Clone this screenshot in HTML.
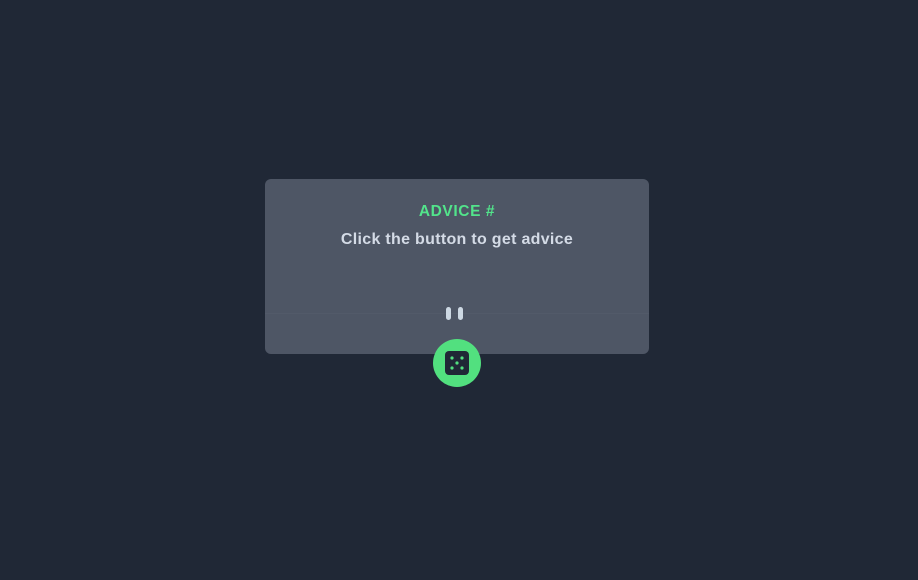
<!DOCTYPE html>
<html><head><meta charset="utf-8"><style>
html,body{margin:0;padding:0;width:918px;height:580px;background:#202836;overflow:hidden;font-family:"Liberation Sans",sans-serif}
.card{position:absolute;left:265px;top:179px;width:384px;height:175px;background:#4e5665;border-radius:6px}
.t1{position:absolute;left:0;width:100%;top:24px;text-align:center;color:#52e48b;font-weight:bold;font-size:15.5px;letter-spacing:0.6px}
.t2{position:absolute;left:0;width:100%;top:52px;text-align:center;color:#d4dbe6;font-weight:bold;font-size:16px;letter-spacing:0.3px}
.line{position:absolute;left:0;right:0;top:134px;height:1px;background:#525a69}
.bar{position:absolute;top:128px;width:5px;height:13px;border-radius:3px;background:#cdd8e3}
.btn{position:absolute;left:433px;top:339px;width:48px;height:48px;border-radius:50%;background:#52e07f}
</style></head><body>
<div class="card">
<div class="t1">ADVICE #</div>
<div class="t2">Click the button to get advice</div>
<div class="line"></div>
<div class="bar" style="left:181px"></div>
<div class="bar" style="left:193px"></div>
</div>
<div class="btn">
<svg width="48" height="48" viewBox="0 0 48 48">
<rect x="12" y="12" width="24" height="24" rx="4" fill="#202836"/>
<g fill="#52e07f"><circle cx="19" cy="19" r="1.6"/><circle cx="29" cy="19" r="1.6"/><circle cx="24" cy="24" r="1.6"/><circle cx="19" cy="29" r="1.6"/><circle cx="29" cy="29" r="1.6"/></g>
</svg>
</div>
</body></html>
